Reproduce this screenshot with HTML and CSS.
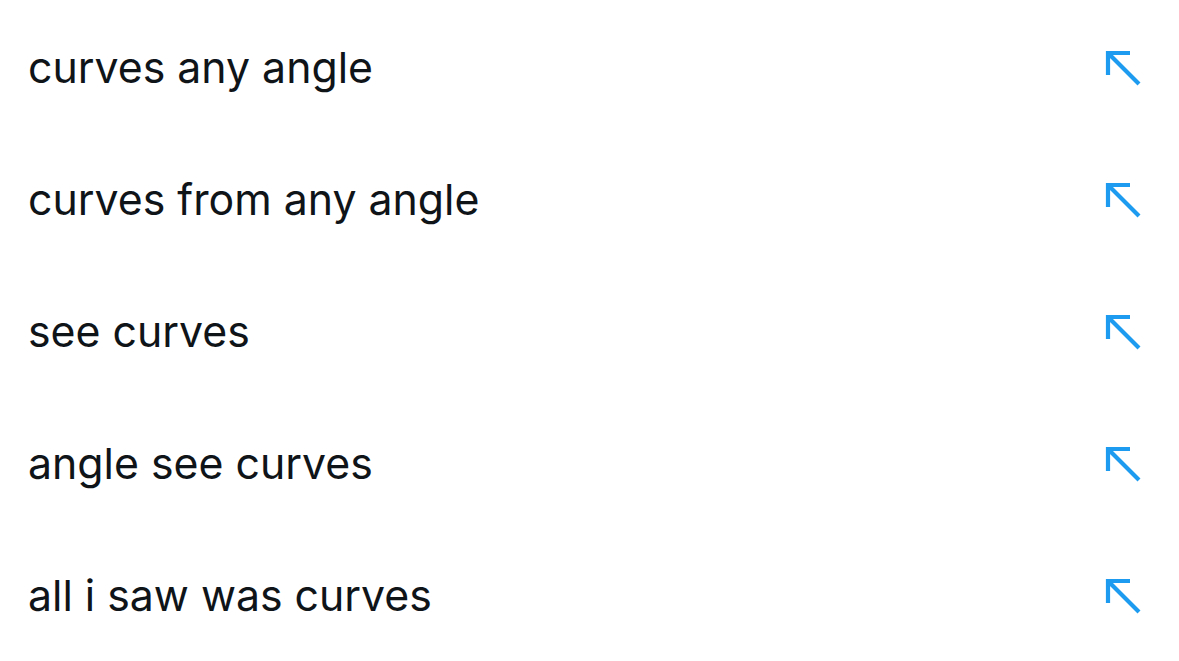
FILE: index.html
```html
<!DOCTYPE html>
<html>
<head>
<meta charset="utf-8">
<link rel="stylesheet" href="styles.css">
</head>
<body>
<ul class="list">
  <li class="row"><span class="text">curves any angle</span><svg class="arrow" viewBox="0 0 36 36"><path d="M3 25V3h22M3 3l31 31"/></svg></li>
  <li class="row"><span class="text">curves from any angle</span><svg class="arrow" viewBox="0 0 36 36"><path d="M3 25V3h22M3 3l31 31"/></svg></li>
  <li class="row"><span class="text">see curves</span><svg class="arrow" viewBox="0 0 36 36"><path d="M3 25V3h22M3 3l31 31"/></svg></li>
  <li class="row"><span class="text">angle see curves</span><svg class="arrow" viewBox="0 0 36 36"><path d="M3 25V3h22M3 3l31 31"/></svg></li>
  <li class="row"><span class="text">all i saw was curves</span><svg class="arrow" viewBox="0 0 36 36"><path d="M3 25V3h22M3 3l31 31"/></svg></li>
</ul>
</body>
</html>
```
FILE: styles.css
```css
html, body { margin: 0; padding: 0; background: #fff; }
.list { list-style: none; margin: 0; padding: 1px 0 0 0; }
.row {
  height: 132px;
  display: flex;
  align-items: center;
  justify-content: space-between;
  padding: 0 38px 0 28px;
}
.text {
  font-family: "Inter", "Liberation Sans", sans-serif;
  font-size: 42.8px;
  color: #0f1419;
}
.arrow {
  width: 36px;
  height: 36px;
  margin-top: 1px;
  fill: none;
  stroke: #1d9bf0;
  stroke-width: 4.2;
}
```
